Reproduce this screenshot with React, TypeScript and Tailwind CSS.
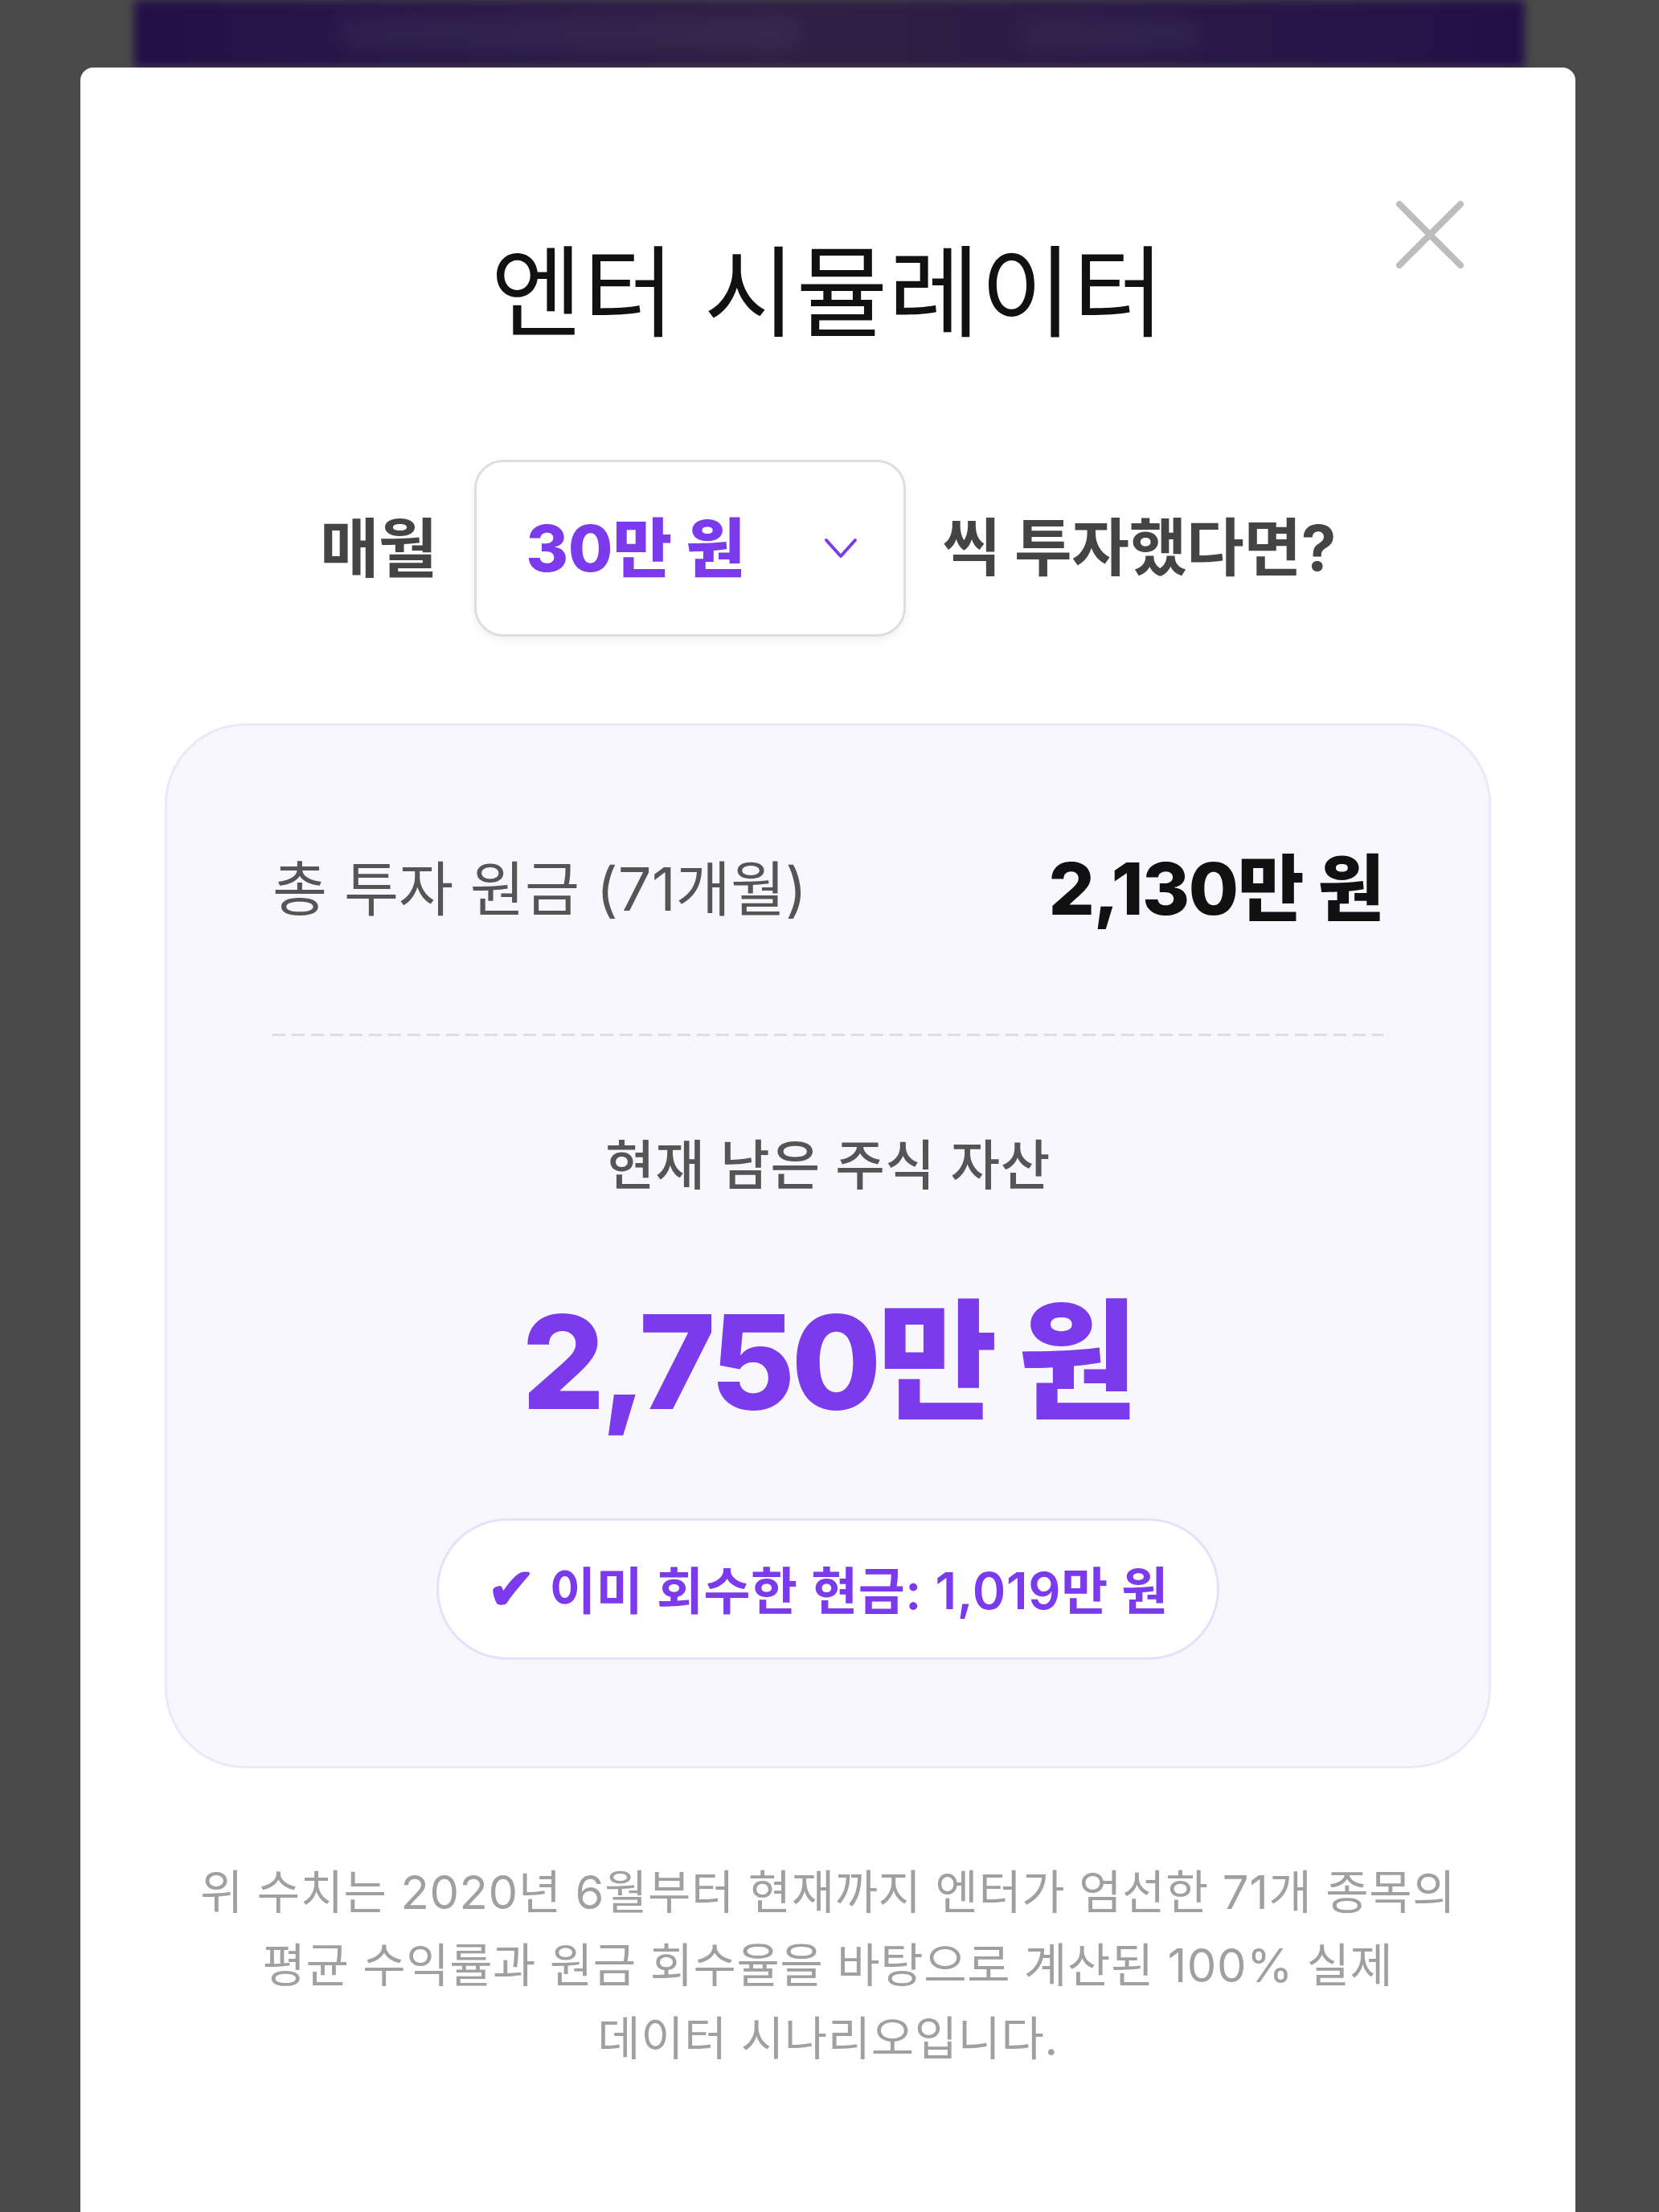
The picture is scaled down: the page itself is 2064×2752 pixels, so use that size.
import { useState } from "react";

const FONT = "font-['Inter','Noto_Sans_CJK_KR',sans-serif]";

function CloseIcon() {
  return (
    <svg width="84" height="84" viewBox="0 0 84 84" fill="none">
      <path
        d="M4 4 L80 80 M80 4 L4 80"
        stroke="#bdbdbd"
        strokeWidth="8"
        strokeLinecap="round"
      />
    </svg>
  );
}

function Chevron() {
  return (
    <svg width="42" height="28" viewBox="0 0 42 28" fill="none">
      <path
        d="M3 4 L21 24 L39 4"
        stroke="#7c3aed"
        strokeWidth="4"
        strokeLinecap="round"
        strokeLinejoin="round"
      />
    </svg>
  );
}

export default function App() {
  const [amount] = useState("30만 원");

  return (
    <div className={`w-[2064px] h-[2752px] bg-[#4a4a4a] overflow-hidden flex flex-col ${FONT}`}>
      {/* blurred page behind the sheet */}
      <div className="h-[84px] mx-[167px] relative overflow-hidden bg-gradient-to-r from-[#230f48] via-[#2f1f44] to-[#230f48] blur-[6px]">
        <div className="absolute left-[250px] right-[900px] top-[22px] h-[40px] rounded-full bg-white/5 blur-[14px]" />
        <div className="absolute left-[1100px] right-[400px] top-[26px] h-[34px] rounded-full bg-white/5 blur-[14px]" />
      </div>

      <div className="relative ml-[100px] w-[1860px] flex-1 bg-white rounded-t-[16px] flex flex-col items-center">
        <button className="absolute left-[1637px] top-[166px]" aria-label="닫기">
          <CloseIcon />
        </button>

        <h1 className="mt-[206px] text-[124px] leading-[149px] font-normal text-[#111] tracking-[0.005em]">
          엔터 시뮬레이터
        </h1>

        <div className="mt-[133px] flex items-center gap-[46px]">
          <span className="text-[80px] leading-[100px] font-bold text-[#444] tracking-[-0.01em]">
            매월
          </span>
          <div className="w-[537px] h-[220px] rounded-[36px] border-[3px] border-[#dedede] bg-white shadow-[0_4px_10px_rgba(0,0,0,0.06)] flex items-center justify-between pl-[62px] pr-[57px]">
            <span className="text-[80px] leading-[100px] font-extrabold text-[#7c3aed] tracking-[0em]">
              {amount}
            </span>
            <Chevron />
          </div>
          <span className="text-[78px] leading-[100px] font-bold text-[#444] tracking-[-0.005em]">
            씩 투자했다면?
          </span>
        </div>

        <div className="mt-[108px] w-[1650px] rounded-[100px] border-[3px] border-[#ece8fc] bg-[#f8f7fe] px-[131px] pt-[150px] pb-[132px] flex flex-col items-center">
          <div className="w-full flex items-center justify-between">
            <span className="text-[74px] leading-[106px] font-normal text-[#555] tracking-[0em]">
              총 투자 원금 (71개월)
            </span>
            <span className="text-[90px] leading-[106px] font-extrabold text-[#111] tracking-[-0.015em]">
              2,130만 원
            </span>
          </div>

          <div className="mt-[127px] w-full h-[3px] bg-[repeating-linear-gradient(90deg,#dedede_0_16px,transparent_16px_24px)]" />

          <p className="mt-[121px] text-[67px] leading-[80px] font-medium text-[#555] tracking-[0.01em]">
            현재 남은 주식 자산
          </p>

          <p className="mt-[109px] text-[162px] leading-[190px] font-extrabold text-[#7c3aed] tracking-[-0.03em]">
            2,750만 원
          </p>

          <div className="mt-[100px] h-[176px] rounded-full border-[3px] border-[#e6e0fc] bg-white px-[60px] flex items-center">
            <span className="text-[63px] leading-[80px] font-semibold text-[#7c3aed] tracking-[0.01em]">
              <span className="text-[72px] font-black">✔</span> 이미 회수한 현금: 1,019만 원
            </span>
          </div>
        </div>

        <p className="mt-[109px] text-center text-[58px] leading-[91px] text-[#a0a0a0] tracking-[0.01em]">
          위 수치는 2020년 6월부터 현재까지 엔터가 엄선한 71개 종목의
          <br />
          평균 수익률과 원금 회수율을 바탕으로 계산된 100% 실제
          <br />
          데이터 시나리오입니다.
        </p>
      </div>
    </div>
  );
}
